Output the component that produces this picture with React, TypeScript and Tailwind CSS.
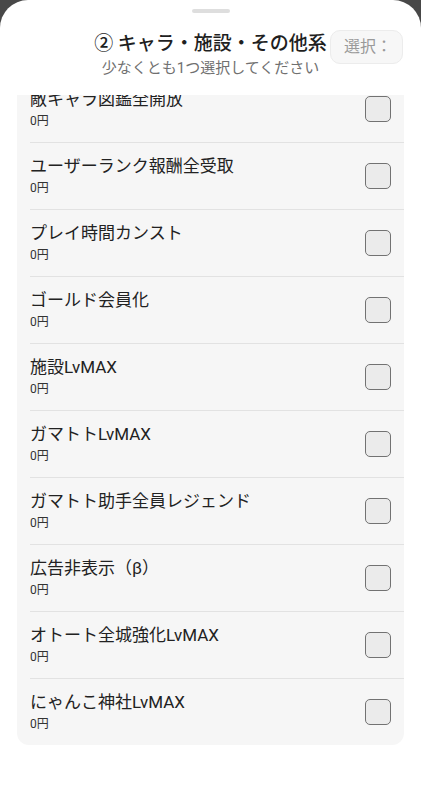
import React, { useLayoutEffect, useRef } from 'react';

const items = [
  '敵キャラ図鑑全開放',
  'ユーザーランク報酬全受取',
  'プレイ時間カンスト',
  'ゴールド会員化',
  '施設LvMAX',
  'ガマトトLvMAX',
  'ガマトト助手全員レジェンド',
  '広告非表示（β）',
  'オトート全城強化LvMAX',
  'にゃんこ神社LvMAX',
];

export default function App() {
  const listRef = useRef<HTMLDivElement>(null);

  useLayoutEffect(() => {
    if (listRef.current) listRef.current.scrollTop = 19;
  }, []);

  return (
    <div
      className="h-[800px] w-full bg-[#484848] overflow-hidden"
      style={{ fontFamily: 'Roboto, "Noto Sans CJK JP", sans-serif' }}
    >
      <div className="relative h-full bg-white rounded-t-[28px] flex flex-col">
        <div className="pt-[9px] flex justify-center">
          <div className="h-[4px] w-[38px] rounded-full bg-[#dedede]" />
        </div>

        <div className="mt-[18px] flex flex-col items-center">
          <h2 className="text-[19px] leading-[26px] font-medium text-[#1f1f1f]">② キャラ・施設・その他系</h2>
          <p className="mt-[1px] text-[15px] leading-[20px] text-[#707070]">少なくとも1つ選択してください</p>
        </div>

        <button className="absolute top-[30px] right-[18px] h-[34px] w-[73px] rounded-[10px] border border-[#ececec] bg-[#f7f7f7] pl-[13px] text-left text-[16px] text-[#9a9a9a]">
          選択：
        </button>

        <div
          ref={listRef}
          className="mt-[17px] flex-1 overflow-y-auto [scrollbar-width:none] px-[17px] pb-[80px]"
        >
          <ul className="rounded-[12px] bg-[#f6f6f6]">
            {items.map((name, i) => (
              <li key={name} className="pl-[13px]">
                <div
                  className={`flex items-center justify-between pr-[13px] py-[11px] ${
                    i < items.length - 1 ? 'border-b border-[#e2e2e2]' : ''
                  }`}
                >
                  <div>
                    <div className="text-[17px] leading-[25px] text-[#222]">{name}</div>
                    <div className="text-[12px] leading-[19px] text-[#333]">0円</div>
                  </div>
                  <div className="h-[26px] w-[26px] rounded-[5px] border-[1.5px] border-[#727272] bg-[#ebebeb]" />
                </div>
              </li>
            ))}
          </ul>
        </div>
      </div>
    </div>
  );
}
